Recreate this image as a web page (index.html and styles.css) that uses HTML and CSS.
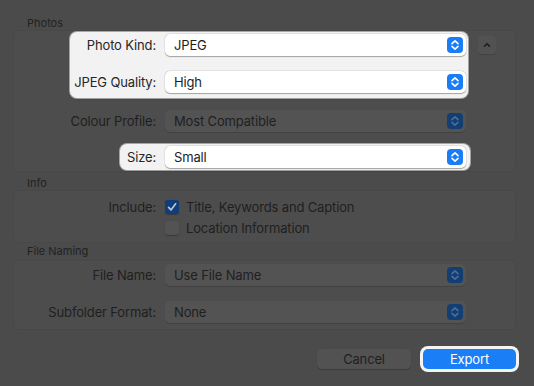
FILE: index.html
```html
<!DOCTYPE html>
<html lang="en">

<head>
    <meta charset="UTF-8">
    <meta name="viewport" content="width=device-width, initial-scale=1.0">
    <title>Export Photos</title>
    <link rel="stylesheet" href="styles.css">
</head>

<body>

    <div class="dialog">

        <!-- Photos -->
        <div class="group-title">Photos</div>
        <div class="box box-photos">
            <div class="spot-line">
                <div class="spot spot-wide">
                    <div class="row">
                        <span class="label">Photo Kind:</span>
                        <div class="popup">
                            <span>JPEG</span>
                            <span class="stepper">
                                <svg viewBox="0 0 16 16"><path d="M5 6.6 L8 3.8 L11 6.6 M5 9.4 L8 12.2 L11 9.4" /></svg>
                            </span>
                        </div>
                    </div>
                    <div class="row row-next">
                        <span class="label">JPEG Quality:</span>
                        <div class="popup">
                            <span>High</span>
                            <span class="stepper">
                                <svg viewBox="0 0 16 16"><path d="M5 6.6 L8 3.8 L11 6.6 M5 9.4 L8 12.2 L11 9.4" /></svg>
                            </span>
                        </div>
                    </div>
                </div>
                <button class="disclose" type="button">
                    <svg viewBox="0 0 18 18"><path d="M6.5 10.2 L9 7.7 L11.5 10.2" /></svg>
                </button>
            </div>

            <div class="row row-dim row-profile">
                <span class="label">Colour Profile:</span>
                <div class="popup">
                    <span>Most Compatible</span>
                    <span class="stepper">
                        <svg viewBox="0 0 16 16"><path d="M5 6.6 L8 3.8 L11 6.6 M5 9.4 L8 12.2 L11 9.4" /></svg>
                    </span>
                </div>
            </div>

            <div class="spot spot-size">
                <div class="row">
                    <span class="label">Size:</span>
                    <div class="popup">
                        <span>Small</span>
                        <span class="stepper">
                            <svg viewBox="0 0 16 16"><path d="M5 6.6 L8 3.8 L11 6.6 M5 9.4 L8 12.2 L11 9.4" /></svg>
                        </span>
                    </div>
                </div>
            </div>
        </div>

        <!-- Info -->
        <div class="group-title">Info</div>
        <div class="box box-info">
            <div class="row row-dim row-check">
                <span class="label">Include:</span>
                <span class="check checked">
                    <svg viewBox="0 0 14 14"><path d="M3.6 7.4 L6 9.9 L10.6 3.8" /></svg>
                </span>
                <span class="check-text">Title, Keywords and Caption</span>
            </div>
            <div class="row row-dim row-check">
                <span class="label"></span>
                <span class="check"></span>
                <span class="check-text">Location Information</span>
            </div>
        </div>

        <!-- File Naming -->
        <div class="group-title">File Naming</div>
        <div class="box box-naming">
            <div class="row row-dim">
                <span class="label">File Name:</span>
                <div class="popup">
                    <span>Use File Name</span>
                    <span class="stepper">
                        <svg viewBox="0 0 16 16"><path d="M5 6.6 L8 3.8 L11 6.6 M5 9.4 L8 12.2 L11 9.4" /></svg>
                    </span>
                </div>
            </div>
            <div class="row row-dim row-subfolder">
                <span class="label">Subfolder Format:</span>
                <div class="popup">
                    <span>None</span>
                    <span class="stepper">
                        <svg viewBox="0 0 16 16"><path d="M5 6.6 L8 3.8 L11 6.6 M5 9.4 L8 12.2 L11 9.4" /></svg>
                    </span>
                </div>
            </div>
        </div>

        <div class="actions">
            <button class="btn btn-cancel" type="button">Cancel</button>
            <div class="btn-ring">
                <button class="btn btn-export" type="button">Export</button>
            </div>
        </div>

    </div>

</body>

</html>
```

FILE: styles.css
```css
body {
    margin: 0;
    background-color: #4b4b4b;
    font-family: 'Inter', 'Noto Sans', sans-serif;
    font-size: 13px;
    letter-spacing: -0.15px;
    color: #1f1f1f;
}

.dialog {
    width: 534px;
    height: 386px;
    box-sizing: border-box;
    padding: 16px 18px 0 13px;
}

/* group headings + boxes */

.group-title {
    font-size: 11px;
    line-height: 14px;
    height: 14px;
    padding-left: 14px;
    letter-spacing: 0;
    color: #222;
}

.box {
    width: 503px;
    box-sizing: border-box;
    background-color: #4d4d4d;
    box-shadow: inset 0 0 0 1px #484848;
    border-radius: 5px;
}

.box-photos {
    padding: 2px 0 2px 0;
    margin-bottom: 4px;
}

.box-info {
    padding: 6px 0 5px 0;
    margin-bottom: 1px;
}

.box-naming {
    margin-top: 2px;
    padding: 4px 0 7px 0;
}

/* rows */

.row {
    display: flex;
    align-items: center;
    height: 22px;
}

.row-next {
    margin-top: 15px;
}

.label {
    width: 143px;
    flex-shrink: 0;
    text-align: right;
    margin-right: 9px;
    white-space: nowrap;
}

.popup {
    width: 301px;
    height: 22px;
    box-sizing: border-box;
    display: flex;
    align-items: center;
    justify-content: space-between;
    padding: 0 3px 0 9px;
    border-radius: 5px;
}

.stepper {
    width: 16px;
    height: 16px;
    border-radius: 4px;
    display: flex;
}

.stepper svg {
    width: 16px;
    height: 16px;
}

.stepper path {
    fill: none;
    stroke-width: 1.6;
    stroke-linecap: round;
    stroke-linejoin: round;
}

/* highlighted (bright) parts */

.spot-line {
    display: flex;
    align-items: flex-start;
}

.spot {
    background-color: #f2f2f2;
    border-radius: 7px;
    box-shadow: 0 0 0 1px rgba(255, 255, 255, 0.5), 0 1px 2px rgba(0, 0, 0, 0.25);
    color: #262626;
}

.spot-wide {
    margin-left: 57px;
    padding: 2px 2px 5px 0;
}

.spot-wide .label {
    width: 86px;
}

.spot-size {
    margin-left: 107px;
    margin-top: 12px;
    width: 348px;
    padding: 2px 2px 2px 0;
}

.spot-size .label {
    width: 36px;
}

.spot .popup {
    background-color: #ffffff;
    box-shadow: 0 0.5px 1px rgba(0, 0, 0, 0.3), 0 0 0 0.5px rgba(0, 0, 0, 0.08);
    color: #1d1d1d;
}

.spot .stepper {
    background-color: #1b7df5;
}

.spot .stepper path {
    stroke: #ffffff;
}

.disclose {
    width: 18px;
    height: 18px;
    margin: 4px 0 0 10px;
    padding: 0;
    border: none;
    border-radius: 4px;
    background-color: #525252;
    box-shadow: 0 1px 1px rgba(0, 0, 0, 0.15);
    display: flex;
}

.disclose svg {
    width: 18px;
    height: 18px;
}

.disclose path {
    fill: none;
    stroke: #1c1c1c;
    stroke-width: 1.6;
    stroke-linecap: round;
    stroke-linejoin: round;
}

/* dimmed parts */

.row-dim .popup {
    background-color: #535353;
    box-shadow: 0 1px 0 #424242;
    color: #1f1f1f;
}

.row-dim .stepper {
    background-color: #123e73;
}

.row-dim .stepper path {
    stroke: #4d6e96;
}

.row-profile {
    margin-top: 12px;
}

.row-subfolder {
    margin-top: 15px;
}

.row-check {
    height: 21px;
}

.check {
    width: 14px;
    height: 14px;
    box-sizing: border-box;
    border-radius: 3px;
    background-color: #535353;
    box-shadow: 0 0.5px 1px rgba(0, 0, 0, 0.25);
    margin-right: 7px;
    display: flex;
}

.check.checked {
    background-color: #103e78;
}

.check svg {
    width: 14px;
    height: 14px;
}

.check path {
    fill: none;
    stroke: #b9c6d6;
    stroke-width: 1.7;
    stroke-linecap: round;
    stroke-linejoin: round;
}

/* buttons */

.actions {
    display: flex;
    justify-content: flex-end;
    align-items: center;
    margin-top: 16px;
    margin-right: -3px;
    gap: 9px;
}

.btn {
    font-family: 'Inter', 'Noto Sans', sans-serif;
    font-size: 13px;
    letter-spacing: -0.15px;
    height: 20px;
    padding: 0;
    border: none;
    border-radius: 5px;
}

.btn-cancel {
    width: 94px;
    background-color: #525252;
    box-shadow: 0 1px 1px rgba(0, 0, 0, 0.2);
    color: #1f1f1f;
}

.btn-ring {
    padding: 3px;
    background-color: #f4f4f4;
    border-radius: 8px;
    display: flex;
}

.btn-export {
    width: 93px;
    background-color: #1a7ef6;
    color: #ffffff;
}
```
